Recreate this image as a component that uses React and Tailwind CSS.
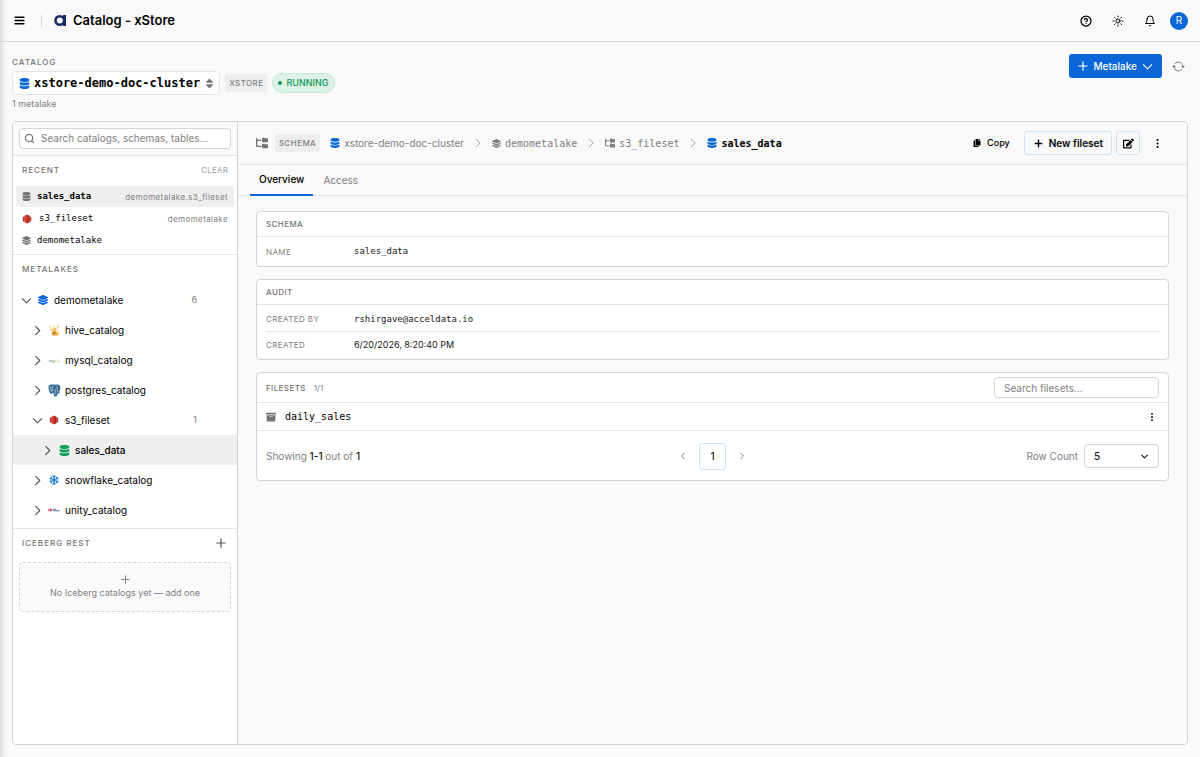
import { useState } from 'react';
import { FaDatabase, FaLayerGroup, FaCopy, FaEdit, FaSnowflake } from 'react-icons/fa';
import { FaFolderTree, FaSort, FaBoxArchive } from 'react-icons/fa6';
import { LuMenu, LuCircleHelp, LuSun, LuBell, LuSearch } from 'react-icons/lu';
import { BsArrowRepeat, BsThreeDotsVertical } from 'react-icons/bs';
import { ChevronDown, ChevronLeft, ChevronRight, Plus } from 'lucide-react';

const MONO = "font-['DejaVu_Sans_Mono','Liberation_Mono',monospace]";

/* --- Logos and line icons --- */

function BrandLogo() {
  return (
    <svg viewBox="0 0 13 13" className="size-[13px]" fill="none" aria-hidden="true">
      <circle cx="5.8" cy="6.5" r="4.3" stroke="#1b2a63" strokeWidth="2.6" />
      <rect x="9" y="1" width="3" height="11" fill="#1b2a63" />
    </svg>
  );
}

function HiveLogo() {
  return (
    <svg viewBox="0 0 24 24" className="size-3" aria-hidden="true">
      <path d="M1 3l4 1 2 4-4-1zM8 1l4 2 1 4-4-2zM17 4l5-1 1 5-4 1z" fill="#f8dfa0" />
      <path d="M3 10l4-1 3 3-3 2zM11 7l5 1 2 5-4 4-4-3z" fill="#f3c057" />
      <path d="M9 15l3-2 4 3 3-1 2 4-2 4H8l-1-4z" fill="#e9a13b" />
      <path d="M11 17l2-1 1 3-2 2z" fill="#8a5a1c" />
      <path d="M17 17l4-2 2 5-3 2z" fill="#f6d384" />
    </svg>
  );
}

function MysqlLogo() {
  return (
    <svg viewBox="0 0 24 24" className="size-3" fill="none" aria-hidden="true">
      <path d="M3 16v-4l2 3 2-3v4M9 12v3h3v-3M12 15v3h-3" stroke="#9db4c0" strokeWidth="1.5" />
      <path d="M14 15c1-3 3-4 5-3 1 1 2 3 4 3" stroke="#f0c48b" strokeWidth="1.5" />
      <path d="M14 16.5h8" stroke="#c9b089" />
    </svg>
  );
}

function PostgresLogo() {
  return (
    <svg viewBox="0 0 24 24" className="size-[13px]" aria-hidden="true">
      <path
        d="M6 1C2 1 .6 4 1 8c.4 4 2 9 4 10 1.6.6 2.4-.6 3.4-1.800.3 1 1.200 1.400 2.200 1.400-.2 3 0 5.400 3 5.400 3.400 0 3.600-2.600 3.800-5.600 2.600.3 4.600-.3 5.400-1.800-1.200.2-2.400 0-2.600-.6C22.400 12 24 6 22 3.600 20 1 17 .6 14.600 1.400 12 .8 9 1 6 1z"
        fill="#336791"
      />
      <path
        d="M9 4c-1.500 2-1.500 6-.6 8.500M15 3.500c2 1.500 2.800 4 2 7-.5 1.500-.3 2.500.6 4.500M13 10v9M5 5c-.8 3 .2 7 1.400 9.500"
        fill="none"
        stroke="#dbe8f2"
        strokeWidth="1.3"
        strokeLinecap="round"
      />
    </svg>
  );
}

function S3Logo() {
  return (
    <svg viewBox="0 0 24 24" className="size-[10px]" aria-hidden="true">
      <path d="M2 7l4-2v14l-4-2zM22 7l-4-2v14l4-2z" fill="#8c3123" />
      <path d="M12 1l-6 3v16l6 3z" fill="#e0392d" />
      <path d="M12 1l6 3v16l-6 3z" fill="#b02a20" />
      <path d="M2 10h5v4H2zM17 10h5v4h-5z" fill="#d9372c" />
    </svg>
  );
}

function UnityLogo() {
  return (
    <svg viewBox="0 0 24 24" className="size-3" aria-hidden="true">
      <path d="M0 9.5h3.5v5H0z" fill="#e8798a" />
      <path d="M4 9.5h4v5H4z" fill="#c9506e" />
      <path d="M9.5 9.5h7v2h-7zM9.5 12.5h14v2h-14z" fill="#5b79a8" />
    </svg>
  );
}

function Chevron({ open, className }) {
  return (
    <svg viewBox="0 0 12 12" className={className} fill="none" stroke="currentColor" strokeWidth="1.2" strokeLinecap="round" strokeLinejoin="round" aria-hidden="true">
      <path d={open ? 'M1.5 4l4.500 4.500L10.500 4' : 'M4 1.500l4.500 4.500L4 10.500'} />
    </svg>
  );
}

function ThinPlus({ className }) {
  return (
    <svg viewBox="0 0 12 12" className={className} fill="none" stroke="currentColor" strokeWidth="1.4" strokeLinecap="round" aria-hidden="true">
      <path d="M6 1v10M1 6h10" />
    </svg>
  );
}

/* --- Data --- */

const RECENT = [
  { name: 'sales_data', path: 'demometalake.s3_fileset', icon: <FaDatabase className="size-[9px] text-neutral-500" />, active: true },
  { name: 's3_fileset', path: 'demometalake', icon: <span className="pr-px"><S3Logo /></span> },
  { name: 'demometalake', icon: <FaLayerGroup className="size-[9px] text-neutral-500" /> },
];

const TREE = [
  { name: 'demometalake', depth: 0, open: true, count: 6, icon: <FaLayerGroup className="size-[10px] text-[#0b66d8]" /> },
  { name: 'hive_catalog', depth: 1, icon: <HiveLogo /> },
  { name: 'mysql_catalog', depth: 1, icon: <MysqlLogo /> },
  { name: 'postgres_catalog', depth: 1, icon: <PostgresLogo /> },
  { name: 's3_fileset', depth: 1, open: true, count: 1, icon: <S3Logo /> },
  { name: 'sales_data', depth: 2, active: true, icon: <FaDatabase className="size-[11px] text-[#10a05a]" /> },
  { name: 'snowflake_catalog', depth: 1, icon: <FaSnowflake className="size-[10px] text-[#2b7fc4]" /> },
  { name: 'unity_catalog', depth: 1, icon: <UnityLogo /> },
];

const INDENT = ['pl-2', 'pl-[19px]', 'pl-[29px]'];

/* --- Small parts --- */

function IconButton({ label, children }) {
  return (
    <button type="button" aria-label={label} className="flex size-5 items-center justify-center">
      {children}
    </button>
  );
}

function Tag({ children }) {
  return (
    <span className="flex h-[18px] items-center rounded-xs bg-neutral-200/60 px-1 text-[8px] font-medium tracking-wider text-[#808080]">
      {children}
    </span>
  );
}

function SideLabel({ children }) {
  return <h2 className="text-[8px] font-medium tracking-[1px] text-neutral-500">{children}</h2>;
}

function CardLabel({ children }) {
  return <h3 className="text-[8px] font-medium tracking-wider text-neutral-500">{children}</h3>;
}

function Card({ header, children }) {
  return (
    <section className="rounded border border-neutral-300 bg-white">
      <div className="border-b border-neutral-200 px-[9px]">{header}</div>
      {children}
    </section>
  );
}

function Field({ label, children }) {
  return (
    <div className="flex h-[25px] items-center border-b border-neutral-200 text-[9px] last:border-b-0">
      <dt className="w-[88px] shrink-0 text-[8px] tracking-wider text-[#808080]">{label}</dt>
      <dd className="text-neutral-900">{children}</dd>
    </div>
  );
}

function TopBar() {
  return (
    <header className="flex h-[42px] shrink-0 items-center border-b border-neutral-300 pl-[9px] pr-3">
      <IconButton label="Menu"><LuMenu className="size-[13px]" strokeWidth={3} /></IconButton>
      <div className="mx-3 h-3 w-px bg-neutral-300" />
      <BrandLogo />
      <h1 className="ml-[6px] text-[13px] font-semibold">Catalog - xStore</h1>
      <div className="ml-auto flex items-center gap-3">
        <IconButton label="Help"><LuCircleHelp className="size-3" strokeWidth={2.5} /></IconButton>
        <IconButton label="Theme"><LuSun className="size-3" /></IconButton>
        <IconButton label="Notifications"><LuBell className="size-3" /></IconButton>
        <button type="button" aria-label="Account" className="-ml-[2px] flex size-[18px] items-center justify-center rounded-full bg-[#0b66d8] text-[10px] text-white">R</button>
      </div>
    </header>
  );
}

function CatalogHeader() {
  return (
    <div className="flex items-start justify-between px-3 pt-3">
      <div>
        <p className="mt-[3px] text-[8px] leading-[10px] font-medium tracking-[1px] text-neutral-500">CATALOG</p>
        <div className="mt-1 flex items-center gap-[5px]">
          <button type="button" className="flex h-6 items-center gap-1 rounded border border-neutral-200 bg-white pr-1 pl-[6px]">
            <FaDatabase className="size-[11px] text-[#0b66d8]" />
            <span className={`text-[12px] font-bold ${MONO}`}>xstore-demo-doc-cluster</span>
            <FaSort className="size-[11px] text-neutral-500" />
          </button>
          <Tag>XSTORE</Tag>
          <span className="flex h-5 items-center gap-1 rounded-full border border-[#c4e8d3] bg-[#dcf2e5] px-[5px] text-[9px] font-medium text-[#14965a]">
            <span className="size-1 rounded-full bg-[#14965a]" />
            RUNNING
          </span>
        </div>
        <p className="mt-[3px] text-[9px] leading-3 text-[#808080]">1 metalake</p>
      </div>
      <div className="flex items-center gap-[6px]">
        <button type="button" className="flex h-6 items-center gap-[5px] rounded-[3px] bg-[#0b66d8] px-[9px] text-[10px] font-medium text-white">
          <ThinPlus className="size-[10px]" />
          Metalake
          <Chevron open className="size-[11px]" />
        </button>
        <IconButton label="Refresh"><BsArrowRepeat className="size-[13px] text-neutral-500" /></IconButton>
      </div>
    </div>
  );
}

function Sidebar() {
  return (
    <aside className="flex w-[225px] shrink-0 flex-col rounded-l border-r border-neutral-300 bg-white">
      <div className="rounded-tl border-b border-neutral-200 bg-neutral-50 p-[6px]">
        <label className="flex h-[21px] items-center gap-[6px] rounded border border-neutral-300 bg-white px-1">
          <LuSearch className="size-[11px] text-neutral-500" strokeWidth={2.5} />
          <input
            type="text"
            aria-label="Search catalogs"
            placeholder="Search catalogs, schemas, tables..."
            className="min-w-0 flex-1 text-[10px] outline-none placeholder:text-[#808080]"
          />
        </label>
      </div>

      <div className="border-b border-neutral-200 px-[3px] pb-[3px]">
        <div className="flex h-[30px] items-center justify-between px-[6px] pb-[2px]">
          <SideLabel>RECENT</SideLabel>
          <button type="button" className="text-[8px] tracking-wide text-neutral-400">CLEAR</button>
        </div>
        <ul className="flex flex-col gap-px">
          {RECENT.map((item) => (
            <li key={item.name}>
              <button
                type="button"
                className={`flex h-[21px] w-full items-center gap-[6px] rounded-[3px] px-[6px] ${item.active ? 'bg-neutral-200/60' : ''}`}
              >
                {item.icon}
                <span className={`text-[9px] ${MONO} ${item.active ? 'font-bold' : ''}`}>{item.name}</span>
                <span className="ml-auto text-[8px] tracking-wider text-[#808080]">{item.path}</span>
              </button>
            </li>
          ))}
        </ul>
      </div>

      <div className="border-b border-neutral-200 pb-[3px]">
        <div className="flex h-[30px] items-center px-[9px] pb-[2px]"><SideLabel>METALAKES</SideLabel></div>
        <ul>
          {TREE.map((node) => (
            <li key={`${node.depth}-${node.name}`}>
              <button
                type="button"
                className={`flex h-[30px] w-full items-center gap-1 rounded-[3px] text-[10px] ${INDENT[node.depth]} ${node.active ? 'bg-neutral-200/60 font-medium' : ''}`}
              >
                <Chevron open={node.open} className="size-[11px] text-neutral-600" />
                <span className="flex w-[14px] justify-center">{node.icon}</span>
                <span>{node.name}</span>
                {node.count && <span className="ml-auto pr-10 text-[9px] font-normal text-[#808080]">{node.count}</span>}
              </button>
            </li>
          ))}
        </ul>
      </div>

      <div className="px-[6px]">
        <div className="flex h-[28px] items-center justify-between px-[3px]">
          <SideLabel>ICEBERG REST</SideLabel>
          <button type="button" aria-label="Add Iceberg catalog" className="px-[2px]"><ThinPlus className="size-[10px] text-neutral-600" /></button>
        </div>
        <button type="button" className="mt-[5px] flex h-[50px] w-full flex-col items-center justify-center gap-[3px] rounded border border-dashed border-neutral-300 bg-neutral-50 text-[9px] leading-3 text-[#808080]">
          <ThinPlus className="size-[9px]" />
          No Iceberg catalogs yet — add one
        </button>
      </div>
    </aside>
  );
}

function Separator() {
  return <Chevron className="mx-[9px] size-[10px] text-neutral-400" />;
}

function DetailHeader() {
  return (
    <div className="flex h-[43px] items-center border-b border-neutral-200 pr-[21px] pl-[18px]">
      <FaFolderTree className="mr-[7px] size-3 text-neutral-500" />
      <Tag>SCHEMA</Tag>
      <nav aria-label="Breadcrumb" className="ml-[10px] flex items-center text-[10px] text-[#808080]">
        <a href="#cluster" className="flex items-center gap-1">
          <FaDatabase className="size-[10px] text-[#0b66d8]" />xstore-demo-doc-cluster
        </a>
        <Separator />
        <a href="#metalake" className={`flex items-center gap-1 ${MONO}`}>
          <FaLayerGroup className="size-[9px]" />demometalake
        </a>
        <Separator />
        <a href="#fileset" className={`flex items-center gap-1 ${MONO}`}>
          <FaFolderTree className="size-[10px]" />s3_fileset
        </a>
        <Separator />
        <span className={`flex items-center gap-1 font-bold text-black ${MONO}`}>
          <FaDatabase className="size-[10px] text-[#0b66d8]" />sales_data
        </span>
      </nav>
      <div className="ml-auto flex items-center gap-1">
        <button type="button" className="mr-[10px] flex items-center gap-[6px] text-[9px] font-medium">
          <FaCopy className="size-2" />Copy
        </button>
        <button type="button" className="flex h-6 items-center gap-[5px] rounded-[3px] border border-[#cfe3f5] px-2 text-[10px] font-semibold">
          <Plus className="size-[11px]" strokeWidth={3} />New fileset
        </button>
        <button type="button" aria-label="Edit" className="flex size-6 items-center justify-center rounded-[3px] border border-[#cfe3f5]">
          <FaEdit className="size-[11px]" />
        </button>
        <button type="button" aria-label="More actions" className="ml-1 flex h-6 w-[18px] items-center justify-center"><BsThreeDotsVertical className="size-[11px]" /></button>
      </div>
    </div>
  );
}

function Filesets() {
  const [rows, setRows] = useState('5');

  return (
    <Card
      header={(
        <div className="flex h-[29px] items-center">
          <CardLabel>FILESETS</CardLabel>
          <span className="ml-2 text-[8px] text-[#808080]">1/1</span>
          <input
            type="text"
            aria-label="Search filesets"
            placeholder="Search filesets..."
            className="ml-auto h-[21px] w-[165px] rounded border border-neutral-300 px-[9px] text-[10px] outline-none placeholder:text-[#808080]"
          />
        </div>
      )}
    >
      <div className="flex h-[28px] items-center border-b border-neutral-200 px-[9px]">
        <FaBoxArchive className="size-[10px] text-neutral-500" />
        <a href="#daily_sales" className={`ml-[9px] text-[10px] ${MONO}`}>daily_sales</a>
        <button type="button" aria-label="Fileset actions" className="ml-auto px-[2px]"><BsThreeDotsVertical className="size-[10px]" /></button>
      </div>
      <div className="grid h-[49px] grid-cols-3 items-center px-[9px] pt-px text-[10px] text-[#808080]">
        <p>
          Showing <span className="font-medium text-neutral-900">1-1</span> out of <span className="font-medium text-neutral-900">1</span>
        </p>
        <div className="flex items-center justify-center gap-[10px]">
          <button type="button" aria-label="Previous page"><ChevronLeft className="size-3" /></button>
          <button type="button" className="flex size-[27px] items-center justify-center rounded-[3px] border border-[#cfe3f5] font-medium text-neutral-900">1</button>
          <button type="button" aria-label="Next page"><ChevronRight className="size-3" /></button>
        </div>
        <div className="flex items-center justify-end gap-[6px]">
          <label htmlFor="row-count">Row Count</label>
          <div className="relative">
            <select
              id="row-count"
              value={rows}
              onChange={(e) => setRows(e.target.value)}
              className="h-6 w-[75px] appearance-none rounded border border-neutral-300 px-[9px] font-medium text-neutral-900"
            >
              <option>5</option>
              <option>10</option>
              <option>25</option>
            </select>
            <ChevronDown className="pointer-events-none absolute top-[7px] right-[9px] size-[11px] text-neutral-900" strokeWidth={2.5} />
          </div>
        </div>
      </div>
    </Card>
  );
}

export default function App() {
  return (
    <div className="flex min-h-screen flex-col bg-[#f9f9f9] font-['Inter',sans-serif] text-black shadow-[inset_6px_0_6px_-5px_rgba(0,0,0,0.18)]">
      <TopBar />
      <CatalogHeader />

      <div className="mx-3 mt-[11px] mb-3 flex flex-1 rounded border border-neutral-300">
        <Sidebar />
        <main className="min-w-0 flex-1">
          <DetailHeader />
          <div role="tablist" className="flex h-[31px] border-b border-neutral-200 px-3 text-[10px]">
            <button type="button" role="tab" aria-selected="true" className="-mb-px border-b-2 border-[#0b66d8] px-[9px] font-medium">Overview</button>
            <button type="button" role="tab" aria-selected="false" className="px-[10px] text-[#808080]">Access</button>
          </div>

          <div className="flex flex-col gap-3 px-[18px] py-[15px]">
            <Card header={<div className="flex h-6 items-center"><CardLabel>SCHEMA</CardLabel></div>}>
              <dl className="px-[9px] py-[2px]">
                <Field label="NAME"><span className={MONO}>sales_data</span></Field>
              </dl>
            </Card>
            <Card header={<div className="flex h-6 items-center"><CardLabel>AUDIT</CardLabel></div>}>
              <dl className="px-[9px] py-[2px]">
                <Field label="CREATED BY"><span className={MONO}>rshirgave@acceldata.io</span></Field>
                <Field label="CREATED">6/20/2026, 8:20:40 PM</Field>
              </dl>
            </Card>
            <Filesets />
          </div>
        </main>
      </div>
    </div>
  );
}
